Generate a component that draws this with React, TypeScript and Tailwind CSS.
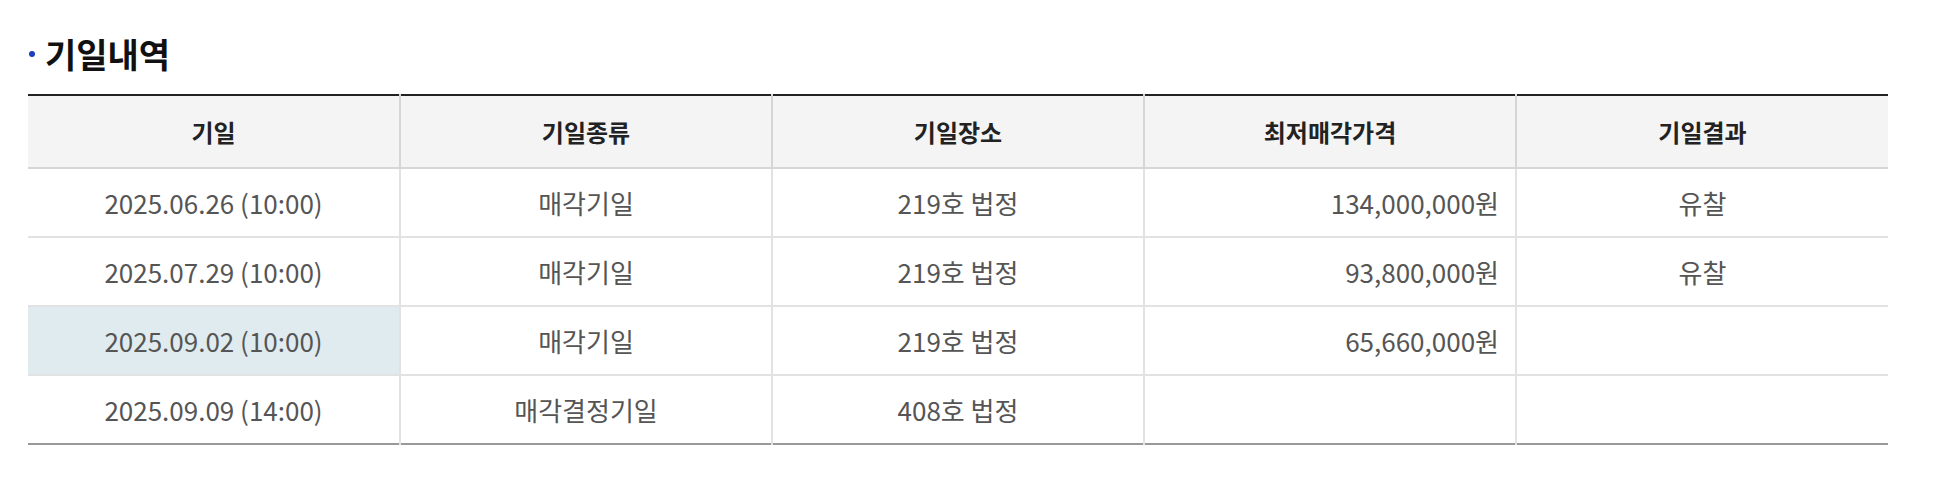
import React from 'react';

type Row = {
  date: string;
  kind: string;
  place: string;
  price: string;
  result: string;
  current?: boolean;
};

const rows: Row[] = [
  { date: '2025.06.26 (10:00)', kind: '매각기일', place: '219호 법정', price: '134,000,000원', result: '유찰' },
  { date: '2025.07.29 (10:00)', kind: '매각기일', place: '219호 법정', price: '93,800,000원', result: '유찰' },
  { date: '2025.09.02 (10:00)', kind: '매각기일', place: '219호 법정', price: '65,660,000원', result: '', current: true },
  { date: '2025.09.09 (14:00)', kind: '매각결정기일', place: '408호 법정', price: '', result: '' },
];

const headers = ['기일', '기일종류', '기일장소', '최저매각가격', '기일결과'];

const App: React.FC = () => {
  return (
    <div
      className="w-[1958px] h-[478px] bg-white px-[28px] pt-[32px]"
      style={{ fontFamily: '"Noto Sans CJK KR", "Noto Sans", sans-serif' }}
    >
      <div className="w-[1860px]">
        <h3 className="flex items-center gap-[10px] text-[34px] leading-[44px] font-bold text-[#111]">
          <span className="ml-[1px] w-[6px] h-[6px] rounded-full bg-[#1d3fc4]" />
          기일내역
        </h3>

        <table className="mt-[18px] w-full table-fixed border-collapse border-t-2 border-t-[#222] border-b-2 border-b-[#999]">
          <thead>
            <tr className="bg-[#f4f4f4] h-[73px]">
              {headers.map((h, i) => (
                <th
                  key={h}
                  className={`text-[24px] font-bold text-[#222] border-b-2 border-b-[#d6d6d9] ${
                    i > 0 ? 'border-l-2 border-l-[#d6d6d9]' : ''
                  }`}
                >
                  {h}
                </th>
              ))}
            </tr>
          </thead>
          <tbody>
            {rows.map((r, ri) => (
              <tr key={ri} className={`h-[69px] text-[26px] text-[#555] ${ri < rows.length - 1 ? 'border-b-2 border-b-[#e2e2e4]' : ''}`}>
                <td className={`text-center ${r.current ? 'bg-[#e0ebef]' : ''}`}>{r.date}</td>
                <td className="text-center border-l-2 border-l-[#e2e2e4]">{r.kind}</td>
                <td className="text-center border-l-2 border-l-[#e2e2e4]">{r.place}</td>
                <td className="text-right pr-[16px] border-l-2 border-l-[#e2e2e4]">{r.price}</td>
                <td className="text-center border-l-2 border-l-[#e2e2e4]">{r.result}</td>
              </tr>
            ))}
          </tbody>
        </table>
      </div>
    </div>
  );
};

export default App;
